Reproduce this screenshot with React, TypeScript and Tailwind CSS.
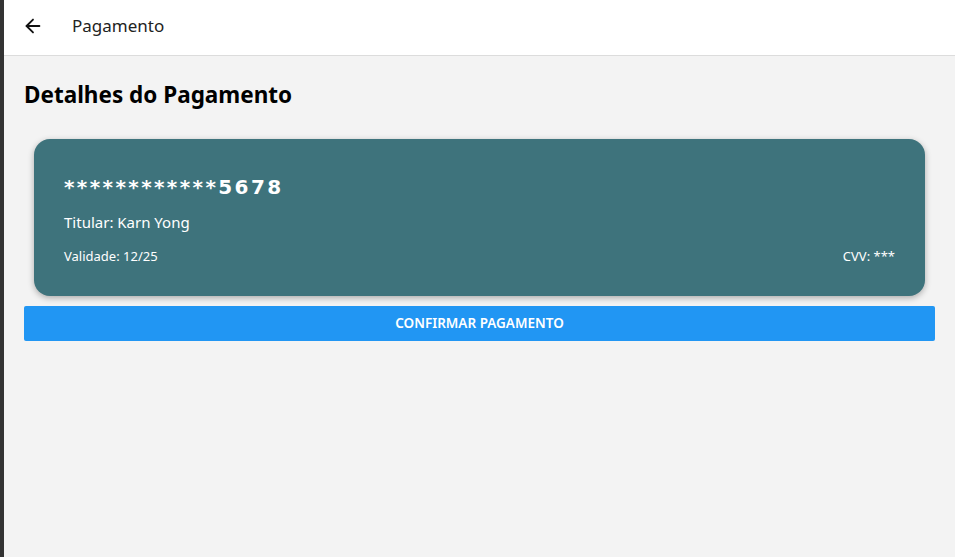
import { ArrowLeft } from "lucide-react";

const font = { fontFamily: '"Noto Sans", "Open Sans", sans-serif' };

export default function App() {
  return (
    <div className="flex h-[557px] w-full bg-[#333333]" style={font}>
      <div className="ml-[4px] flex flex-1 flex-col bg-[#f3f3f3]">
        <header className="flex h-[56px] items-center border-b border-[#dcdcdc] bg-white px-[18px] pb-[4px]">
          <ArrowLeft className="h-[22px] w-[22px] text-[#111]" strokeWidth={2} />
          <span className="ml-[28px] text-[17px] text-[#222]">Pagamento</span>
        </header>

        <main className="px-[20px] pt-[22px]">
          <h1 className="text-[22.5px] font-bold text-black">Detalhes do Pagamento</h1>

          <div className="mx-[10px] mt-[27px] h-[157px] rounded-[16px] bg-[#3e737c] px-[30px] pt-[30px] text-white shadow-[0_2px_6px_rgba(0,0,0,0.3)]">
            <div
              className="h-[30px] pt-[3px] text-[20px] leading-[30px] font-bold tracking-[2.4px]"
              style={{ fontFamily: '"DejaVu Sans", sans-serif' }}
            >
              ************5678
            </div>
            <div className="mt-[12px] text-[15px]">Titular: Karn Yong</div>
            <div className="mt-[14px] flex justify-between text-[13px]">
              <span>Validade: 12/25</span>
              <span>CVV: ***</span>
            </div>
          </div>

          <button className="mt-[10px] flex h-[35px] w-full items-center justify-center rounded-[2px] bg-[#2196f3] text-[13.5px] font-semibold text-white">
            CONFIRMAR PAGAMENTO
          </button>
        </main>
      </div>
    </div>
  );
}
